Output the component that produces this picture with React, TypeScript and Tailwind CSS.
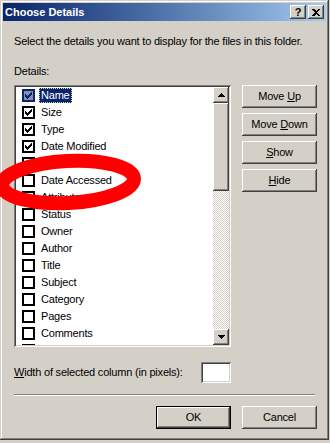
import React from 'react';

const raised =
    'bg-[#d4d0c8] shadow-[inset_-1px_-1px_#404040,inset_1px_1px_#ffffff,inset_-2px_-2px_#808080,inset_2px_2px_#d4d0c8]';
const sunken =
    'shadow-[inset_1px_1px_#808080,inset_-1px_-1px_#ffffff,inset_2px_2px_#404040,inset_-2px_-2px_#d4d0c8]';

// the last row is only a sliver at the bottom of the list
const columns: [string, boolean][] = [
    ['Name', true],
    ['Size', true],
    ['Type', true],
    ['Date Modified', true],
    ['Date Created', false],
    ['Date Accessed', false],
    ['Attributes', false],
    ['Status', false],
    ['Owner', false],
    ['Author', false],
    ['Title', false],
    ['Subject', false],
    ['Category', false],
    ['Pages', false],
    ['Comments', false],
    ['', false],
];

function Check({ color }: { color: string }) {
    return (
        <svg width="7" height="7" viewBox="0 0 7 7" shapeRendering="crispEdges">
            <path d="M0 2 L2 4 L6 0 L7 0 L7 3 L2 7 L0 5 Z" fill={color} />
        </svg>
    );
}

function Arrow({ up }: { up?: boolean }) {
    return (
        <svg width="7" height="4" viewBox="0 0 7 4" shapeRendering="crispEdges">
            <path d={up ? 'M3.5 0 L7 4 L0 4 Z' : 'M0 0 L7 0 L3.5 4 Z'} fill="#000" />
        </svg>
    );
}

function Button({ children, isDefault }: { children: React.ReactNode; isDefault?: boolean }) {
    return (
        <div
            className={`w-[75px] h-[23px] flex items-center justify-center ${raised} ${
                isDefault ? 'border border-black' : ''
            }`}
        >
            <span>{children}</span>
        </div>
    );
}

export default function App() {
    return (
        <div className="relative w-[330px] h-[443px] bg-[#d4d0c8] overflow-hidden font-['Liberation_Sans',Arial,sans-serif] text-[11px] leading-[13px] tracking-[-0.2px] text-black">
            {/* Window frame */}
            <div className="w-[329px] h-[440px] p-[3px] flex flex-col bg-[#d4d0c8] shadow-[inset_-1px_-1px_#404040,inset_1px_1px_#d4d0c8,inset_-2px_-2px_#808080,inset_2px_2px_#ffffff]">
                {/* Title bar */}
                <div className="h-[18px] flex items-center bg-linear-to-r from-[#0a246a] to-[#a6caf0] pl-[2px] pr-[2px]">
                    <span className="flex-1 text-white font-bold tracking-normal">Choose Details</span>
                    <div className="flex gap-[2px]">
                        <div className={`w-[16px] h-[14px] flex items-center justify-center font-bold text-[11px] ${raised}`}>
                            ?
                        </div>
                        <div className={`w-[16px] h-[14px] flex items-center justify-center ${raised}`}>
                            <svg width="8" height="7" viewBox="0 0 8 7" shapeRendering="crispEdges">
                                <path d="M0 0 H2 L4 2 L6 0 H8 L5 3.5 L8 7 H6 L4 5 L2 7 H0 L3 3.5 Z" fill="#000" />
                            </svg>
                        </div>
                    </div>
                </div>

                {/* Body */}
                <div className="flex flex-col pl-[11px] pr-[9px] pt-[14px]">
                    <p>Select the details you want to display for the files in this folder.</p>
                    <p className="mt-[17px]">Details:</p>

                    <div className="mt-[7px] flex">
                        {/* List */}
                        <div className={`w-[217px] h-[262px] p-[2px] bg-white flex ${sunken}`}>
                            <div className="flex-1 overflow-hidden flex flex-col">
                                {columns.map(([name, checked], i) => {
                                    const selected = i === 0;
                                    return (
                                        <div key={i} className="h-[17px] shrink-0 flex items-center pl-[6px]">
                                            <div
                                                className={`w-[13px] h-[13px] border-2 flex items-center justify-center ${
                                                    selected ? 'border-[#0a246a] bg-[#8490b0]' : 'border-black bg-white'
                                                }`}
                                            >
                                                {checked && <Check color={selected ? '#0a246a' : '#000'} />}
                                            </div>
                                            {name && (
                                                <span
                                                    className={`ml-[4px] h-[15px] flex items-center px-[2px] ${
                                                        selected
                                                            ? 'bg-[#0a246a] text-white outline-1 outline-dotted outline-[#d4d0c8] -outline-offset-1'
                                                            : ''
                                                    }`}
                                                >
                                                    {name}
                                                </span>
                                            )}
                                        </div>
                                    );
                                })}
                            </div>
                            {/* Scrollbar */}
                            <div className="w-[16px] flex flex-col">
                                <div className={`h-[16px] flex items-center justify-center ${raised}`}>
                                    <Arrow up />
                                </div>
                                <div className={`h-[88px] ${raised}`} />
                                <div className="flex-1 bg-[image:repeating-conic-gradient(#ffffff_0_25%,#d4d0c8_0_50%)] bg-[length:2px_2px]" />
                                <div className={`h-[16px] flex items-center justify-center ${raised}`}>
                                    <Arrow />
                                </div>
                            </div>
                        </div>

                        {/* Side buttons */}
                        <div className="ml-[11px] flex flex-col gap-[5px]">
                            <Button>
                                Move <span className="underline underline-offset-[1px]">U</span>p
                            </Button>
                            <Button>
                                Move <span className="underline underline-offset-[1px]">D</span>own
                            </Button>
                            <Button>
                                <span className="underline underline-offset-[1px]">S</span>how
                            </Button>
                            <Button>
                                <span className="underline underline-offset-[1px]">H</span>ide
                            </Button>
                        </div>
                    </div>

                    {/* Width field */}
                    <div className="mt-[15px] w-[217px] flex items-center justify-between">
                        <span>
                            <span className="underline underline-offset-[1px]">W</span>idth of selected column (in pixels):
                        </span>
                        <div className={`w-[30px] h-[21px] bg-white ${sunken}`} />
                    </div>

                    {/* Separator */}
                    <div className="mt-[11px] mr-[2px] h-[2px] border-t border-b border-t-[#808080] border-b-white" />

                    {/* Dialog buttons */}
                    <div className="mt-[10px] flex justify-end gap-[11px]">
                        <Button isDefault>OK</Button>
                        <Button>Cancel</Button>
                    </div>
                </div>
            </div>

            {/* Red annotation ring */}
            <svg className="absolute inset-0 pointer-events-none" width="330" height="443">
                <ellipse
                    cx="68"
                    cy="182"
                    rx="66"
                    ry="21"
                    fill="none"
                    stroke="#ff0000"
                    strokeWidth="14"
                    transform="rotate(-3 68 182)"
                />
            </svg>
        </div>
    );
}
